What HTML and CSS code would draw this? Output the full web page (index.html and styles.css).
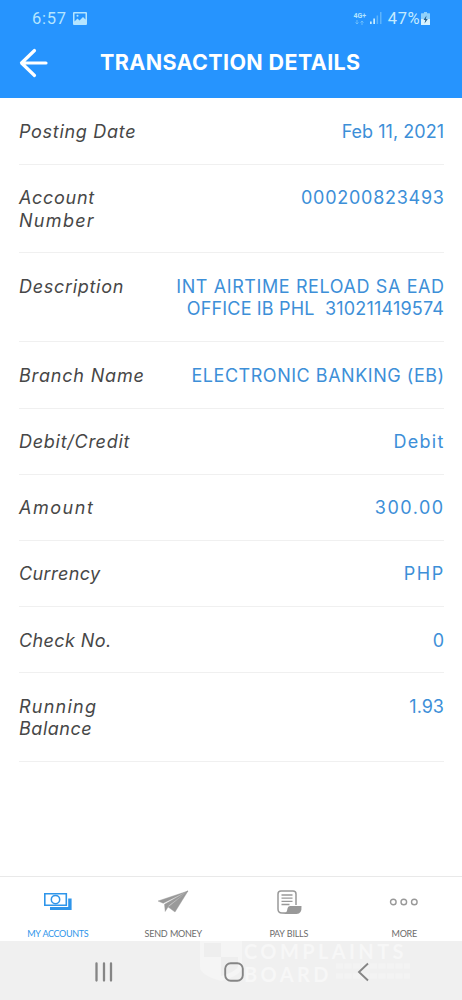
FILE: index.html
```html
<!DOCTYPE html>
<html lang="en">
<head>
<meta charset="utf-8">
<title>Transaction Details</title>
<link rel="stylesheet" href="styles.css">
</head>
<body>
<div class="screen">
  <header class="header">
    <div class="status">
      <span class="time">6:57</span>
      <svg class="status-photo" width="14" height="13" viewBox="0 0 14 13"><path d="M1 0h12a1 1 0 0 1 1 1v11a1 1 0 0 1-1 1H1a1 1 0 0 1-1-1V1a1 1 0 0 1 1-1zM1.500 1.500v8l3-3 2 2 3.500-3.500 2.500 2.500v-6z" fill="#b5e5ff" fill-rule="evenodd"/><circle cx="4.500" cy="3.800" r="1" fill="#b5e5ff"/></svg>
      <span class="net"><b class="net-name">4G+</b><svg width="9" height="5" viewBox="0 0 9 5"><path d="M2 0v4M.5 2.500 2 4l1.500-1.500M7 5V1M5.500 2.500 7 1l1.500 1.500" fill="none" stroke="#6fc0fa" stroke-width=".9"/></svg></span>
      <svg class="signal" width="12" height="12" viewBox="0 0 12 12"><path d="M0 9.500h1.700V12H0zM3.300 6.500H5V12H3.300z" fill="#c9edff"/><path d="M6.600 3.500h1.500V12H6.600zM10 0h1.500v12H10z" fill="#5eb4fb"/></svg>
      <span class="percent">47%</span>
      <svg class="battery" width="9" height="13" viewBox="0 0 9 13"><path d="M3 0h3v1.300h2.500q.5 0 .5.500V12.500q0 .5-.5.500H.5q-.5 0-.5-.5V1.800q0-.5.5-.5H3z" fill="#8fd1fb"/><path d="M0 7h9v5.500q0 .5-.5.500H.5q-.5 0-.5-.5z" fill="#d7f2ff"/><path d="M5.500 3.500 2.500 8h1.800l-.8 3.500L6.800 7H4.900z" fill="#28618f"/></svg>
    </div>
    <div class="titlebar">
      <svg class="back" width="30" height="30" viewBox="0 0 30 30"><path d="M15.500 2.500 2.500 15l13 12.500M3 15h24" fill="none" stroke="#fff" stroke-width="3.200" stroke-linecap="round" stroke-linejoin="round"/></svg>
      <h1 class="title">TRANSACTION DETAILS</h1>
    </div>
  </header>
  <main class="details">
    <div class="row"><div class="label t68">Posting Date</div><div class="value t3">Feb 11, 2021</div></div>
    <div class="row"><div class="label"><span class="t68">Account</span><br><span class="t133">Number</span></div><div class="value t75">000200823493</div></div>
    <div class="row"><div class="label t68">Description</div><div class="value"><span class="t65">INT AIRTIME RELOAD SA EAD</span><br><span class="t19">OFFICE IB PHL&nbsp; 310211419574</span></div></div>
    <div class="row"><div class="label t80">Branch Name</div><div class="value t57">ELECTRONIC BANKING (EB)</div></div>
    <div class="row"><div class="label t75">Debit/Credit</div><div class="value t133">Debit</div></div>
    <div class="row"><div class="label t150">Amount</div><div class="value t150">300.00</div></div>
    <div class="row"><div class="label t39">Currency</div><div class="value t150">PHP</div></div>
    <div class="row"><div class="label t39">Check No.</div><div class="value">0</div></div>
    <div class="row"><div class="label"><span class="t124">Running</span><br><span class="t57">Balance</span></div><div class="value">1.93</div></div>
  </main>
  <nav class="tabs">
    <div class="tab active">
      <svg class="icon" width="30" height="26" viewBox="0 0 30 26"><path d="M1.800 3.800h21.500v11.500H1.800z" fill="none" stroke="#2e95ea" stroke-width="1.600"/><circle cx="12.500" cy="9.600" r="4.200" fill="none" stroke="#2e95ea" stroke-width="1.500"/><path d="M25.200 8.500H28.600v11.500H7v-3h18.200z" fill="#2e95ea"/></svg>
      <span class="l-accounts">MY ACCOUNTS</span>
    </div>
    <div class="tab">
      <svg class="icon" width="32" height="26" viewBox="0 0 32 26"><path d="M31 1 1 11l5.200 2.300zM31 1 7.500 14.300 8.200 21.500 12 15.500zM31 1 11.200 17l6.800 5z" fill="#999" stroke="#999" stroke-width=".4"/></svg>
      <span>SEND MONEY</span>
    </div>
    <div class="tab">
      <svg class="icon" width="26" height="26" viewBox="0 0 26 26"><path d="M20 15V4Q20 1 17 1H5Q2 1 2 4v15q0 4 4 4h5" fill="none" stroke="#999" stroke-width="1.500"/><path d="M5.500 5h11M5.500 8.200h11M5.500 11.400h11M5.500 14.500h8" stroke="#999" stroke-width="1.300"/><path d="M14 16h11.500q.5 8-5 8H6.500q4.500-.5 5-5.500.3-2.500 2.500-2.500z" fill="#999"/></svg>
      <span>PAY BILLS</span>
    </div>
    <div class="tab">
      <svg class="icon" width="30" height="26" viewBox="0 0 30 26"><g fill="none" stroke="#999" stroke-width="1.400"><circle cx="4.300" cy="12" r="2.800"/><circle cx="14.800" cy="12" r="2.800"/><circle cx="25.300" cy="12" r="2.800"/></g></svg>
      <span>MORE</span>
    </div>
  </nav>
  <footer class="sysnav">
    <div class="watermark">
      <svg width="42" height="42" viewBox="0 0 42 42"><path d="M0 0h42v27q0 8-21 14Q0 35 0 27z" fill="#f5f5f5"/><path d="M4 3h17v14H4zM21 17h17v10q-3 5-17 9z" fill="#eee"/></svg>
      <div class="mark-text">
        <div class="mark-top">COMPLAINTS</div>
        <div class="mark-bottom">BOARD<svg width="76" height="20" viewBox="0 0 76 20"><path d="M0 5h74M0 15h74" stroke="#f3f3f3" stroke-width="5" stroke-dasharray="7 1.500"/></svg></div>
      </div>
    </div>
    <svg class="key" width="20" height="20" viewBox="0 0 20 20"><path d="M2.500 1.500v17M10 1.500v17M17 1.500v17" stroke="#858585" stroke-width="2.300" stroke-linecap="round"/></svg>
    <svg class="key" width="20" height="20" viewBox="0 0 20 20"><rect x="1.200" y="1.200" width="17.600" height="17.600" rx="5.500" fill="none" stroke="#858585" stroke-width="1.900"/></svg>
    <svg class="key" width="20" height="20" viewBox="0 0 20 20"><path d="M14 1.500 5 10l9 8.500" fill="none" stroke="#858585" stroke-width="1.900"/></svg>
  </footer>
</div>
</body>
</html>
```
FILE: styles.css
```css
* { box-sizing: border-box; }
body { margin: 0; background: #fff; font-family: Inter, "Open Sans", sans-serif; }
.screen { width: 462px; height: 1000px; display: flex; flex-direction: column; overflow: hidden; }

.header { height: 98.4px; background: #2694fe; color: #fff; flex: none; }
.status { height: 36px; padding: 0 32px; display: flex; align-items: center; color: #b5e5ff; font-family: Roboto, sans-serif; }
.time { font-size: 16.5px; letter-spacing: .7px; width: 41px; }
.net { margin-left: auto; display: flex; flex-direction: column; align-items: center; width: 14px; }
.net-name { font-size: 7px; line-height: 8px; }
.signal { margin-left: 3px; }
.percent { font-size: 16.5px; letter-spacing: .5px; margin-left: 6px; color: #c4ebff; }
.battery { margin-left: 1px; }
.titlebar { display: flex; align-items: center; height: 53px; padding-left: 19px; }
.title { margin: -1px 0 0 51px; font-size: 21.5px; line-height: 26px; font-weight: 700; letter-spacing: .37px; white-space: nowrap; }

.details { flex: 1; padding: 0 18px 0 19px; }
.row { display: flex; justify-content: space-between; padding: 22.300px 0 20.350px; border-bottom: 1px solid #f0f0f0; font-size: 18px; line-height: 22.6px; white-space: nowrap; }
.label { color: #474747; font-style: italic; }
.value { color: #3d8fd8; text-align: right; }
.t3 { letter-spacing: .03px; }
.t19 { letter-spacing: .17px; }
.t39 { letter-spacing: .4px; }
.t57 { letter-spacing: .53px; }
.t65 { letter-spacing: .6px; }
.t68 { letter-spacing: .7px; }
.t75 { letter-spacing: .73px; }
.t80 { letter-spacing: .82px; }
.t124 { letter-spacing: 1.24px; }
.t133 { letter-spacing: 1.3px; }
.t150 { letter-spacing: 1.52px; }
.value.t75, .value.t133, .value.t150, .value .t65, .value.t57 { margin-right: -.7px; }

.tabs { height: 65px; flex: none; display: grid; grid-template-columns: repeat(4, 1fr); border-top: 1px solid #e9e9e9; background: #fff; }
.tab { display: flex; flex-direction: column; align-items: center; padding-top: 13px; font: 9px/12px Lato, sans-serif; letter-spacing: -.25px; word-spacing: .5px; color: #6c6c6c; }
.tab span { margin-top: 12px; }
.tab .l-accounts { letter-spacing: -.35px; }
.active { color: #2e95ea; }

.sysnav { position: relative; height: 59px; flex: none; background: #f0f0f0; display: flex; justify-content: space-between; padding: 21px 88px 0 94px; overflow: hidden; }
.key { position: relative; }
.watermark { position: absolute; left: 200px; top: -1px; display: flex; gap: 2px; color: #f7f7f7; }
.mark-text { padding-top: 1px; font: 700 20px/22px Lato, sans-serif; letter-spacing: 3.4px; white-space: nowrap; }
.mark-top { line-height: 20px; }
.mark-bottom { display: flex; gap: 4px; line-height: 26px; }
```
